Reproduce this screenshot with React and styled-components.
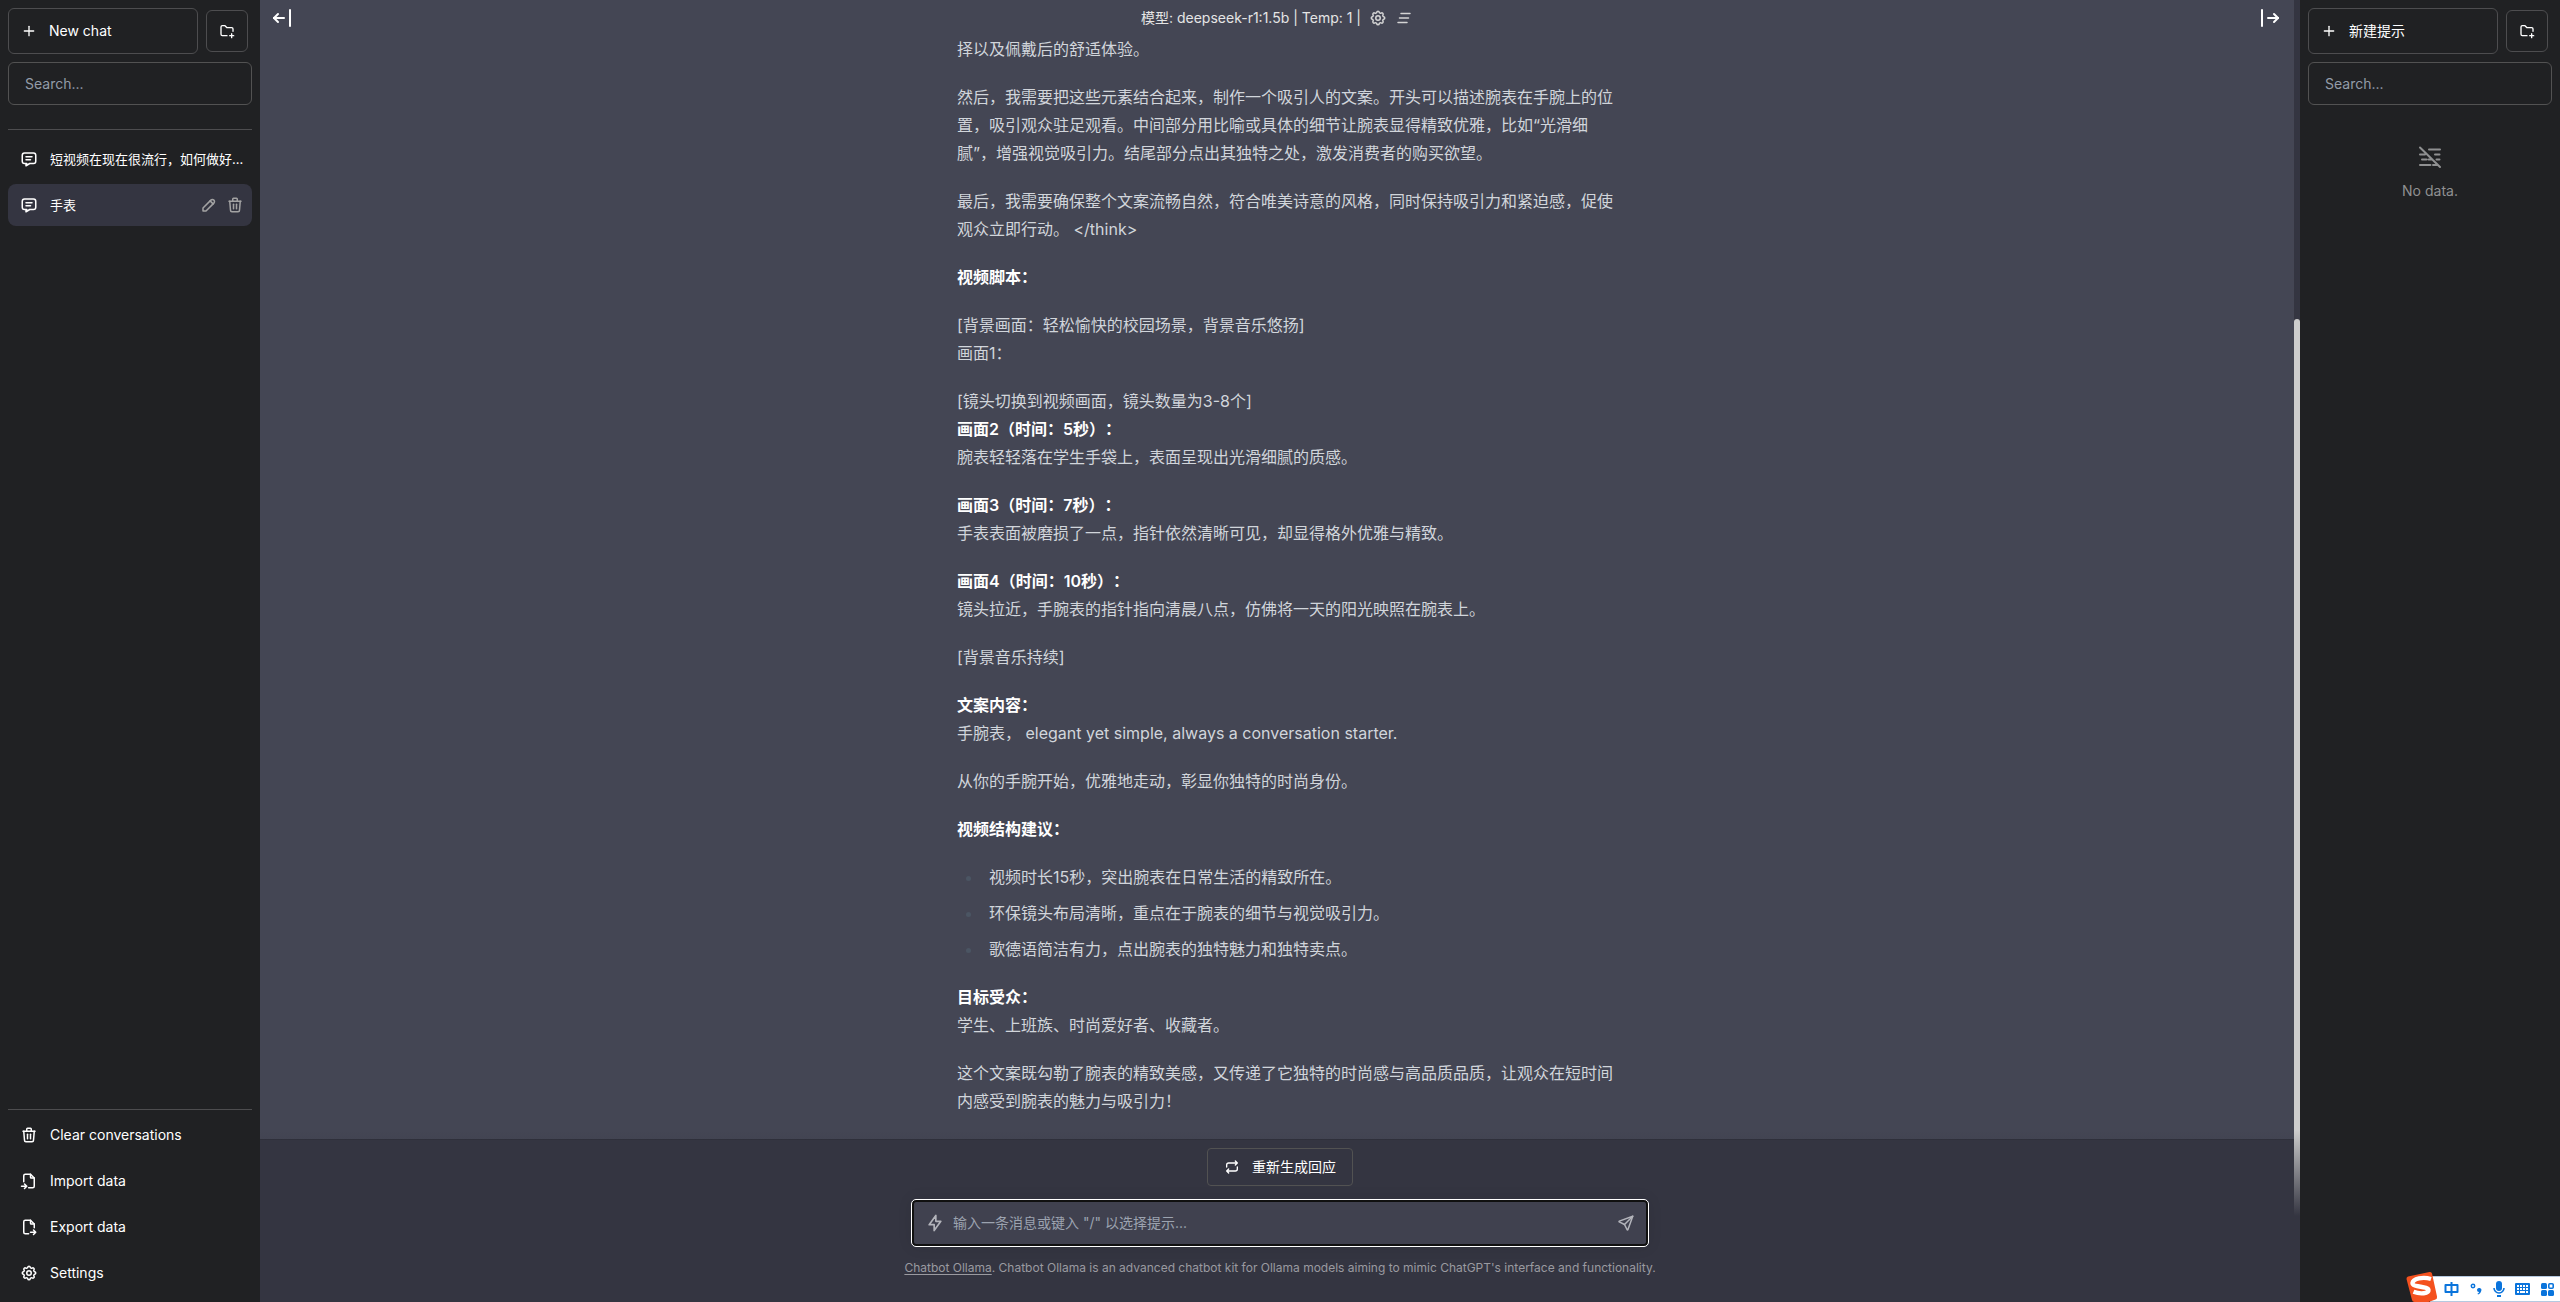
import React from "react";
import styled, { createGlobalStyle } from "styled-components";

const GlobalStyle = createGlobalStyle`
  *, *::before, *::after { box-sizing: border-box; }
  body {
    margin: 0;
    background: #343541;
    color: #fff;
    font-family: Inter, "Noto Sans CJK SC", sans-serif;
    font-size: 14px;
    line-height: 20px;
  }
  button, input, textarea { font: inherit; color: inherit; }
  button { cursor: pointer; }
`;

/* ---------- icons ---------- */

const Svg = styled.svg.attrs({
  viewBox: "0 0 24 24",
  fill: "none",
  stroke: "currentColor",
  strokeWidth: 2,
  strokeLinecap: "round",
  strokeLinejoin: "round",
  "aria-hidden": true,
})`
  display: block;
  flex: none;
  width: ${(p) => p.$size || 18}px;
  height: ${(p) => p.$size || 18}px;
`;

const GEAR =
  "M10.325 4.317c.426 -1.756 2.924 -1.756 3.35 0a1.724 1.724 0 0 0 2.573 1.066c1.543 -.94 3.31 .826 2.37 2.37a1.724 1.724 0 0 0 1.065 2.572c1.756 .426 1.756 2.924 0 3.35a1.724 1.724 0 0 0 -1.066 2.573c.94 1.543 -.826 3.31 -2.37 2.37a1.724 1.724 0 0 0 -2.572 1.065c-.426 1.756 -2.924 1.756 -3.35 0a1.724 1.724 0 0 0 -2.573 -1.066c-1.543 .94 -3.31 -.826 -2.37 -2.37a1.724 1.724 0 0 0 -1.065 -2.572c-1.756 -.426 -1.756 -2.924 0 -3.35a1.724 1.724 0 0 0 1.066 -2.573c-.94 -1.543 .826 -3.31 2.37 -2.37c1 .608 2.296 .07 2.572 -1.065z";

const PATHS = {
  plus: ["M12 5v14", "M5 12h14"],
  folderPlus: [
    "M12 19h-7a2 2 0 0 1 -2 -2v-11a2 2 0 0 1 2 -2h4l3 3h7a2 2 0 0 1 2 2v3.5",
    "M16 19h6",
    "M19 16v6",
  ],
  chat: [
    "M8 9h8",
    "M8 13h6",
    "M9 18h-3a3 3 0 0 1 -3 -3v-8a3 3 0 0 1 3 -3h12a3 3 0 0 1 3 3v8a3 3 0 0 1 -3 3h-5l-5 3v-3z",
  ],
  pencil: ["M4 20h4l10.5 -10.5a2.828 2.828 0 1 0 -4 -4l-10.5 10.5v4", "M13.5 6.5l4 4"],
  trash: [
    "M4 7h16",
    "M10 11v6",
    "M14 11v6",
    "M5 7l1 12a2 2 0 0 0 2 2h8a2 2 0 0 0 2 -2l1 -12",
    "M9 7v-3a1 1 0 0 1 1 -1h4a1 1 0 0 1 1 1v3",
  ],
  fileImport: [
    "M14 3v4a1 1 0 0 0 1 1h4",
    "M5 13v-8a2 2 0 0 1 2 -2h7l5 5v11a2 2 0 0 1 -2 2h-5.5m-9.5 -2h7m-3 -3l3 3l-3 3",
  ],
  fileExport: [
    "M14 3v4a1 1 0 0 0 1 1h4",
    "M11.5 21h-4.5a2 2 0 0 1 -2 -2v-14a2 2 0 0 1 2 -2h7l5 5v5m-5 6h7m-3 -3l3 3l-3 3",
  ],
  settings: [GEAR, "M9 12a3 3 0 1 0 6 0a3 3 0 0 0 -6 0"],
  clearAll: ["M8 6h12", "M6 12h12", "M4 18h12"],
  barLeft: ["M4 12h10", "M4 12l4 4", "M4 12l4 -4", "M20 4v16"],
  barRight: ["M20 12h-10", "M20 12l-4 4", "M20 12l-4 -4", "M4 4v16"],
  repeat: ["M4 12v-3a3 3 0 0 1 3 -3h13m-3 -3l3 3l-3 3", "M20 12v3a3 3 0 0 1 -3 3h-13m3 3l-3 -3l3 -3"],
  bolt: ["M13 3v7h6l-8 11v-7h-6l8 -11"],
  send: ["M10 14l11 -11", "M21 3l-6.5 18a.55 .55 0 0 1 -1 0l-3.5 -7l-7 -3.5a.55 .55 0 0 1 0 -1l18 -6.5"],
};

const Icon = ({ name, size }) => (
  <Svg $size={size}>
    {PATHS[name].map((d) => (
      <path key={d} d={d} />
    ))}
  </Svg>
);

const NoDataIcon = () => (
  <Svg $size={24} strokeLinecap="butt">
    <path d="M2 2.5l20 19.5M11 4.5h11M2 9.5h5M17 9.5h4.5M4 14.5h4.5M10.5 14.5h4M18.500 14.5h3M2 20h10.500M15 20h5" />
  </Svg>
);

/* ---------- page ---------- */

const Page = styled.div`
  display: flex;
  height: 100vh;
  overflow: hidden;
`;

const Sidebar = styled.aside`
  display: flex;
  flex-direction: column;
  flex: none;
  width: 260px;
  padding: 8px;
  gap: 8px;
  background: #202123;
`;

const SidebarTop = styled.div`
  display: flex;
  align-items: center;
  gap: 8px;
`;

const CreateButton = styled.button`
  display: flex;
  align-items: center;
  gap: 12px;
  width: 190px;
  height: 46px;
  padding: 0 12px;
  border: 1px solid #4d4d4f;
  border-radius: 6px;
  background: transparent;
`;

const FolderButton = styled.button`
  display: grid;
  place-items: center;
  width: 42px;
  height: 42px;
  padding: 0;
  border: 1px solid #4d4d4f;
  border-radius: 6px;
  background: transparent;
`;

const SearchInput = styled.input`
  width: 100%;
  height: 43px;
  padding: 0 16px;
  border: 1px solid #525252;
  border-radius: 6px;
  background: #202123;
  outline: none;
  &::placeholder { color: #939ca8; opacity: 1; }
`;

const ChatList = styled.nav`
  display: flex;
  flex-direction: column;
  flex: 1;
  gap: 4px;
  margin-top: 16px;
  padding-top: 8px;
  border-top: 1px solid #4d4d4f;
`;

const ChatRow = styled.div`
  display: flex;
  align-items: center;
  gap: 8px;
  height: 42px;
  padding-right: 8px;
  border-radius: 8px;
  background: ${(p) => (p.$active ? "#343541" : "transparent")};
`;

const ChatButton = styled.button`
  display: flex;
  flex: 1;
  align-items: center;
  gap: 12px;
  min-width: 0;
  padding: 12px 0 12px 12px;
  border: 0;
  background: transparent;
  font-size: 13px;
  line-height: 18px;
  text-align: left;
  white-space: nowrap;
`;

const IconButton = styled.button`
  display: block;
  padding: 0;
  border: 0;
  background: transparent;
  color: ${(p) => p.$color || "#a3a3a3"};
`;

const Menu = styled.nav`
  display: flex;
  flex-direction: column;
  gap: 4px;
  padding-top: 4px;
  border-top: 1px solid #4d4d4f;
`;

const MenuButton = styled.button`
  display: flex;
  align-items: center;
  gap: 12px;
  height: 42px;
  padding: 0 12px;
  border: 0;
  background: transparent;
`;

const NoData = styled.div`
  display: flex;
  flex-direction: column;
  align-items: center;
  gap: 12px;
  padding-top: 32px;
  color: #8f9091;
`;

const Main = styled.main`
  position: relative;
  display: flex;
  flex: 1;
  min-width: 0;
  background: #343541;
`;

const Thread = styled.div`
  display: flex;
  flex: 1;
  flex-direction: column;
  min-width: 0;
`;

const TopBar = styled.header`
  display: flex;
  flex: none;
  align-items: center;
  justify-content: center;
  gap: 8px;
  height: 36px;
  background: #444654;
  color: #e5e5e5;
`;

const Message = styled.article`
  display: flex;
  flex: 1;
  flex-direction: column;
  justify-content: flex-end;
  align-items: center;
  min-height: 0;
  overflow: hidden;
  border-bottom: 1px solid #2e2f3a;
  background: #444654;
`;

const Prose = styled.div`
  width: 100%;
  max-width: 768px;
  padding: 0 44px 24px 64px;
  color: #d1d5db;
  font-size: 16px;
  line-height: 28px;
  p { margin: 0 0 20px; }
  p:last-child { margin: 0; }
  strong {
    color: #fff;
    font-weight: 600;
    text-spacing-trim: space-all;
  }
`;

const Bullets = styled.ul`
  margin: 0 0 20px;
  padding-left: 26px;
  li { padding-left: 6px; }
  li + li { margin-top: 8px; }
  li::marker { color: #4b5563; }
`;

const ThreadEnd = styled.div`
  flex: none;
  height: 162px;
`;

const ScrollTrack = styled.div`
  display: flex;
  flex: none;
  flex-direction: column;
  width: 6px;
  padding-top: 319px;
  background: #343541;
`;

const ScrollThumb = styled.div`
  flex: 1;
  border-radius: 3px;
  background: #cdcdcd;
`;

const Composer = styled.footer`
  position: absolute;
  inset: auto 0 0 0;
  display: flex;
  flex-direction: column;
  align-items: center;
  padding: 18px 0 24px;
  background: linear-gradient(to bottom, transparent, #343541 50%, #343541);
`;

const Regenerate = styled.button`
  display: flex;
  align-items: center;
  gap: 12px;
  height: 38px;
  padding: 0 16px;
  border: 1px solid #525252;
  border-radius: 4px;
  background: #343541;
`;

const InputBox = styled.form`
  display: flex;
  align-items: center;
  gap: 8px;
  width: 736px;
  height: 46px;
  margin: 14px 0 12px;
  padding: 0 11px;
  border: 2px solid #101010;
  border-radius: 4px;
  outline: 1px solid #fff;
  background: #40414f;
  box-shadow: 0 0 15px rgba(0, 0, 0, 0.1);
  color: #b3b4bb;
`;

const PromptInput = styled.input`
  flex: 1;
  min-width: 0;
  padding: 0;
  border: 0;
  background: transparent;
  outline: none;
  &::placeholder { color: #9ca3af; opacity: 1; }
`;

const Notice = styled.p`
  margin: 0;
  color: #9a9aa0;
  font-size: 12px;
  line-height: 20px;
  a { color: inherit; text-underline-offset: 2px; }
`;

const PanelToggle = styled.button`
  position: absolute;
  top: 6px;
  ${(p) => p.$side}: ${(p) => (p.$side === "left" ? 10 : 18)}px;
  padding: 0;
  border: 0;
  background: transparent;
`;

/* ---------- input method bar ---------- */

const ImeBar = styled.div`
  position: fixed;
  right: 0;
  bottom: 0;
  display: flex;
  align-items: flex-end;
`;

const ImeKeys = styled.div`
  display: flex;
  align-items: center;
  justify-content: space-between;
  width: 130px;
  height: 26px;
  margin-left: -8px;
  padding: 0 6px 0 14px;
  border-top: 1px solid #b5c9e0;
  border-bottom: 1px solid #b5c9e0;
  background: #fff;
  color: #0a74dc;
`;

const ImeSvg = styled.svg`
  display: block;
  flex: none;
`;

const SogouLogo = styled(ImeSvg)`
  position: relative;
  z-index: 1;
`;

const Ime = () => (
  <ImeBar>
    <SogouLogo width="32" height="31" viewBox="0 0 32 31" aria-label="Sogou">
      <path d="M2 5.5Q0.3 6 0.5 8L6 29q.5 2 2.500 2h14l7-2.500q2-.7 1.500-3L26 2.500Q25.500 .6 23.500 1z" fill="#f4511e" />
      <path d="M25 8C17 5.500 7 7.500 6.500 12c-.4 4.500 15.500 3 16 7c.3 3.500-8 4.500-15 1.800" fill="none" stroke="#fff" strokeWidth="4.4" />
    </SogouLogo>
    <ImeKeys>
      <ImeSvg width="15" height="16" viewBox="0 0 15 16" fill="none" stroke="currentColor" strokeWidth="2">
        <path d="M1.500 4h12v7h-12zM7.500 1v14" strokeLinejoin="round" />
      </ImeSvg>
      <ImeSvg width="12" height="16" viewBox="0 0 12 16" fill="currentColor">
        <circle cx="3" cy="5" r="1.7" fill="none" stroke="currentColor" strokeWidth="1.5" />
        <path d="M7 8.800a2.200 2.200 0 1 1 4.200 1.200c-.5 2-1.500 3-3.200 3.600l-.5-1c1-.5 1.400-1 1.500-1.700a2 2 0 0 1-2-2.100z" />
      </ImeSvg>
      <ImeSvg width="12" height="16" viewBox="0 0 12 16" fill="currentColor">
        <rect x="3" y="0" width="6" height="10" rx="3" />
        <path d="M1 7a5 5 0 0 0 10 0" fill="none" stroke="currentColor" strokeWidth="1.6" />
        <rect x="4" y="14" width="4" height="2" />
      </ImeSvg>
      <ImeSvg width="15" height="12" viewBox="0 0 15 12">
        <rect width="15" height="12" rx="1" fill="currentColor" />
        <path
          d="M2 2h2v2h-2zM5 2h2v2h-2zM8 2h2v2h-2zM11 2h2v2h-2zM2 5h2v2h-2zM5 5h2v2h-2zM8 5h2v2h-2zM11 5h2v2h-2zM2 8h2v2h-2zM5 8h5v2h-5zM11 8h2v2h-2z"
          fill="#fff"
        />
      </ImeSvg>
      <ImeSvg width="13" height="13" viewBox="0 0 13 13" fill="currentColor">
        <rect width="6" height="6" rx="1.5" />
        <rect y="7" width="6" height="6" rx="1.5" />
        <rect x="7" y="7" width="6" height="6" rx="1.5" />
        <rect x="7.8" y=".8" width="4.4" height="4.4" rx="1" fill="none" stroke="currentColor" strokeWidth="1.6" />
      </ImeSvg>
    </ImeKeys>
  </ImeBar>
);

const SidebarHead = ({ label, searchLabel }) => (
  <>
    <SidebarTop>
      <CreateButton type="button">
        <Icon name="plus" size={16} />
        {label}
      </CreateButton>
      <FolderButton type="button" aria-label="New folder">
        <Icon name="folderPlus" size={16} />
      </FolderButton>
    </SidebarTop>
    <SearchInput type="text" placeholder="Search..." aria-label={searchLabel} />
  </>
);

const MENU = [
  ["trash", "Clear conversations"],
  ["fileImport", "Import data"],
  ["fileExport", "Export data"],
  ["settings", "Settings"],
];

export default function App() {
  return (
    <>
      <GlobalStyle />
      <Page>
        <Sidebar>
          <SidebarHead label="New chat" searchLabel="Search conversations" />
          <ChatList>
            <ChatRow>
              <ChatButton type="button">
                <Icon name="chat" />
                短视频在现在很流行，如何做好...
              </ChatButton>
            </ChatRow>
            <ChatRow $active>
              <ChatButton type="button">
                <Icon name="chat" />
                手表
              </ChatButton>
              <IconButton type="button" aria-label="Rename">
                <Icon name="pencil" />
              </IconButton>
              <IconButton type="button" aria-label="Delete">
                <Icon name="trash" />
              </IconButton>
            </ChatRow>
          </ChatList>
          <Menu>
            {MENU.map(([icon, label]) => (
              <MenuButton type="button" key={label}>
                <Icon name={icon} />
                {label}
              </MenuButton>
            ))}
          </Menu>
        </Sidebar>

        <Main>
          <Thread>
            <TopBar>
              <span>模型: deepseek-r1:1.5b | Temp: 1 |</span>
              <IconButton type="button" aria-label="Model settings" $color="#d4d4d4">
                <Icon name="settings" />
              </IconButton>
              <IconButton type="button" aria-label="Clear messages" $color="#d4d4d4">
                <Icon name="clearAll" />
              </IconButton>
            </TopBar>
            <Message>
              <Prose>
                <p>择以及佩戴后的舒适体验。</p>
                <p>
                  然后，我需要把这些元素结合起来，制作一个吸引人的文案。开头可以描述腕表在手腕上的位置，吸引观众驻足观看。中间部分用比喻或具体的细节让腕表显得精致优雅，比如“光滑细腻”，增强视觉吸引力。结尾部分点出其独特之处，激发消费者的购买欲望。
                </p>
                <p>
                  最后，我需要确保整个文案流畅自然，符合唯美诗意的风格，同时保持吸引力和紧迫感，促使观众立即行动。 &lt;/think&gt;
                </p>
                <p>
                  <strong>视频脚本：</strong>
                </p>
                <p>
                  [背景画面：轻松愉快的校园场景，背景音乐悠扬]
                  <br />
                  画面1：
                </p>
                <p>
                  [镜头切换到视频画面，镜头数量为3-8个]
                  <br />
                  <strong>画面2（时间：5秒）：</strong>
                  <br />
                  腕表轻轻落在学生手袋上，表面呈现出光滑细腻的质感。
                </p>
                <p>
                  <strong>画面3（时间：7秒）：</strong>
                  <br />
                  手表表面被磨损了一点，指针依然清晰可见，却显得格外优雅与精致。
                </p>
                <p>
                  <strong>画面4（时间：10秒）：</strong>
                  <br />
                  镜头拉近，手腕表的指针指向清晨八点，仿佛将一天的阳光映照在腕表上。
                </p>
                <p>[背景音乐持续]</p>
                <p>
                  <strong>文案内容：</strong>
                  <br />
                  手腕表， elegant yet simple, always a conversation starter.
                </p>
                <p>从你的手腕开始，优雅地走动，彰显你独特的时尚身份。</p>
                <p>
                  <strong>视频结构建议：</strong>
                </p>
                <Bullets>
                  <li>视频时长15秒，突出腕表在日常生活的精致所在。</li>
                  <li>环保镜头布局清晰，重点在于腕表的细节与视觉吸引力。</li>
                  <li>歌德语简洁有力，点出腕表的独特魅力和独特卖点。</li>
                </Bullets>
                <p>
                  <strong>目标受众：</strong>
                  <br />
                  学生、上班族、时尚爱好者、收藏者。
                </p>
                <p>
                  这个文案既勾勒了腕表的精致美感，又传递了它独特的时尚感与高品质品质，让观众在短时间内感受到腕表的魅力与吸引力！
                </p>
              </Prose>
            </Message>
            <ThreadEnd />
          </Thread>
          <ScrollTrack>
            <ScrollThumb />
          </ScrollTrack>

          <Composer>
            <Regenerate type="button">
              <Icon name="repeat" size={16} />
              重新生成回应
            </Regenerate>
            <InputBox>
              <IconButton type="button" aria-label="Prompts" $color="inherit">
                <Icon name="bolt" size={20} />
              </IconButton>
              <PromptInput
                type="text"
                aria-label="Message"
                placeholder={'输入一条消息或键入 "/" 以选择提示...'}
              />
              <IconButton type="submit" aria-label="Send" $color="inherit">
                <Icon name="send" />
              </IconButton>
            </InputBox>
            <Notice>
              <a href="#chatbot-ollama">Chatbot Ollama</a>. Chatbot Ollama is an advanced chatbot kit for Ollama models
              aiming to mimic ChatGPT's interface and functionality.
            </Notice>
          </Composer>

          <PanelToggle type="button" $side="left" aria-label="Hide conversations">
            <Icon name="barLeft" size={24} />
          </PanelToggle>
          <PanelToggle type="button" $side="right" aria-label="Hide prompts">
            <Icon name="barRight" size={24} />
          </PanelToggle>
        </Main>

        <Sidebar>
          <SidebarHead label="新建提示" searchLabel="Search prompts" />
          <NoData>
            <NoDataIcon />
            No data.
          </NoData>
        </Sidebar>
      </Page>
      <Ime />
    </>
  );
}
